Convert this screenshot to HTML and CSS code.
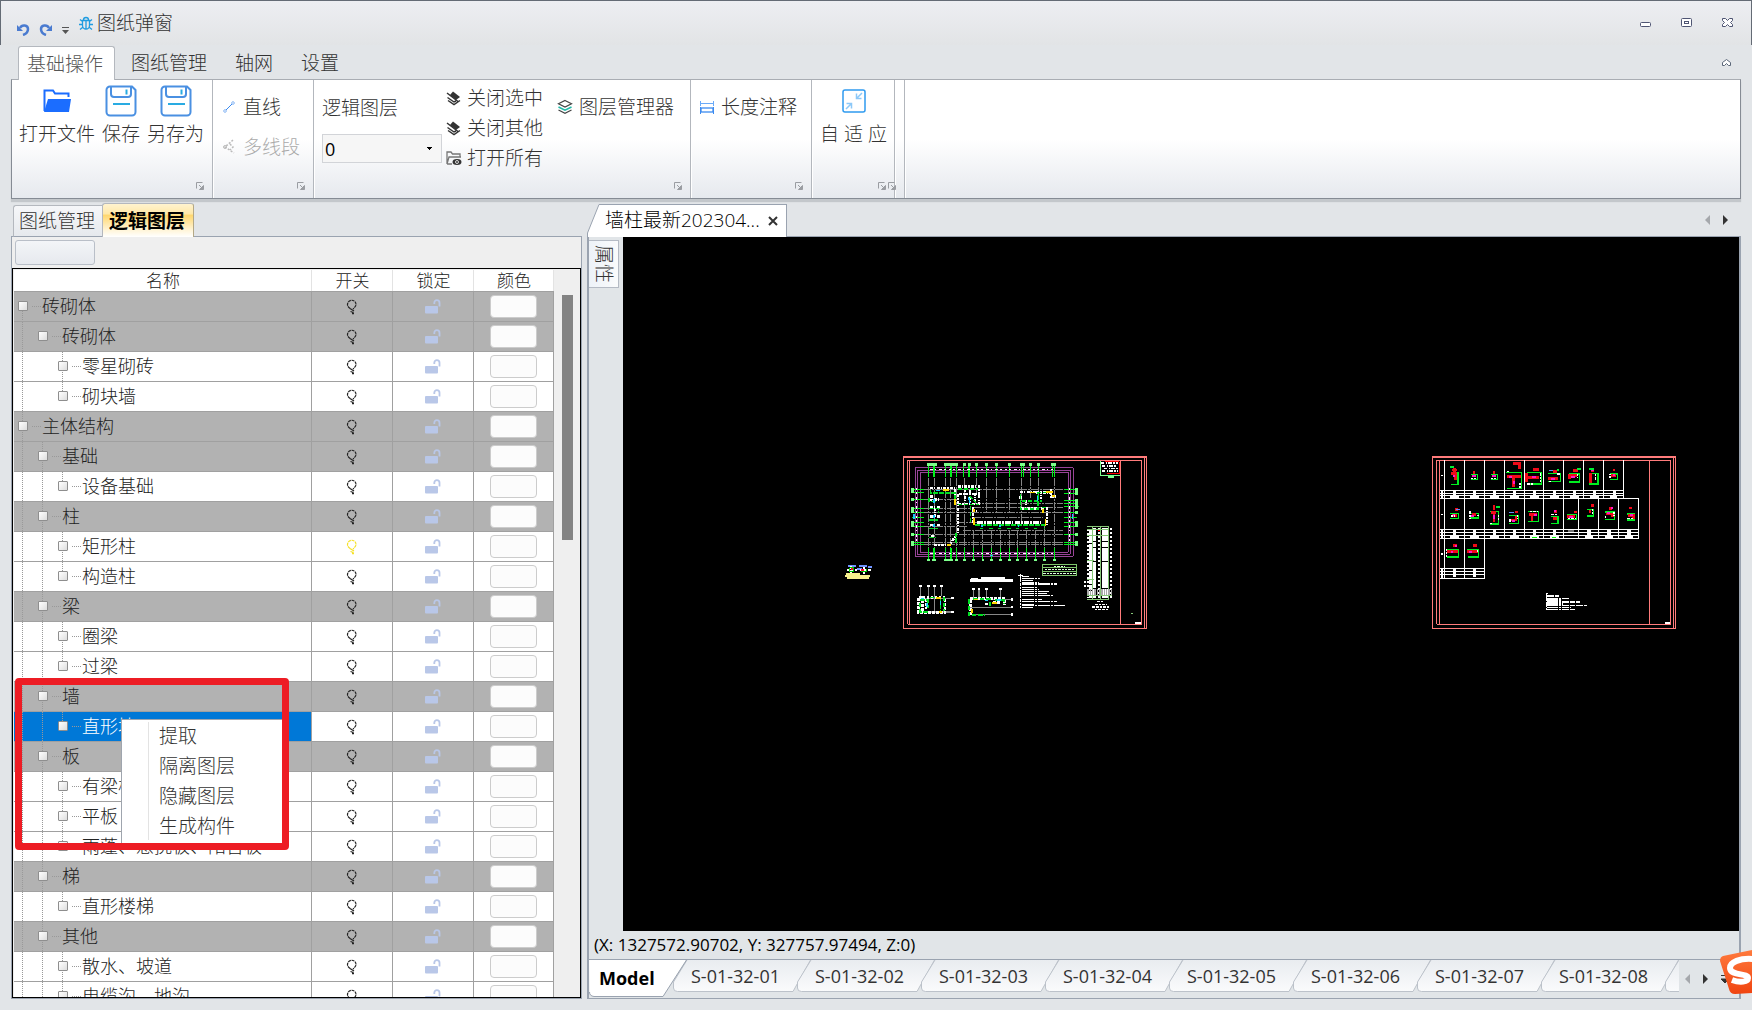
FILE: index.html
```html
<!DOCTYPE html>
<html lang="zh-CN">
<head>
<meta charset="utf-8">
<title>图纸弹窗</title>
<link rel="stylesheet" href="styles.css">
</head>
<body>
<svg class="defs" aria-hidden="true">
  <symbol id="bulb" viewBox="0 0 12 16"><path d="M4 9.500C3 8.500 1.500 7.500 1.500 5.500a4 4 0 0 1 8.500 0c0 2-1.500 3-3 4.500" fill="none" stroke="currentColor" stroke-width="1.200" stroke-dasharray="3 .7"/><path d="M4 9.500l4 2.500M4.500 12.500l3 1M6 14.500h2" stroke="currentColor" stroke-width="1.300"/></symbol>
  <symbol id="lock" viewBox="0 0 16 15"><path d="M1 7h11a1 1 0 0 1 1 1v5.500a1 1 0 0 1-1 1H1a1 1 0 0 1-1-1V8a1 1 0 0 1 1-1z" fill="#b9c7e8"/><path d="M9.300 5V3.700a2.600 2.600 0 0 1 5.200 0V7.500" fill="none" stroke="#b9c7e8" stroke-width="1.800"/></symbol>
  <symbol id="launch" viewBox="0 0 8 8"><path d="M.5 6.500V.5h6" fill="none" stroke="#9a9da2"/><path d="M7.500 3.500v4h-4zM3 3l3 3" fill="#9a9da2" stroke="#9a9da2"/></symbol>
  <symbol id="save" viewBox="0 0 32 32"><path d="M5 1.500h22l3.500 3.500v22a3.500 3.500 0 0 1-3.500 3.500H5A3.500 3.500 0 0 1 1.500 27V5A3.500 3.500 0 0 1 5 1.500z" fill="none" stroke="#4a90e2" stroke-width="2"/><path d="M6 2v7a3 3 0 0 0 3 3h14a3 3 0 0 0 3-3V2" fill="none" stroke="#4a90e2" stroke-width="2"/><path d="M21.500 4.500v5M8 19h17" stroke="#29abe2" stroke-width="2"/></symbol>
  <symbol id="closelayer" viewBox="0 0 16 16"><path d="M7 1.500L14 7l-4 3L4 5z" fill="#333"/><path d="M1 3l11 8.500M1.500 7.500L8 12l2-1M2 10.500L8 14.500l6-4" fill="none" stroke="#333" stroke-width="1.500"/></symbol>
  <symbol id="sheet" viewBox="0 0 138 32"><path d="M14 0L.5 22v6q0 3.500 4 3.500H120L137.500 0" fill="url(#tabfill)" stroke="#bcc2ca"/></symbol>
  <linearGradient id="tabfill" x1="0" y1="0" x2="0" y2="1"><stop offset="0" stop-color="#e9ecf0"/><stop offset="1" stop-color="#fafbfc"/></linearGradient>
  <linearGradient id="orange" x1="0" y1="0" x2="0" y2="1"><stop offset="0" stop-color="#ff7a3d"/><stop offset="1" stop-color="#f04410"/></linearGradient>
</svg>

<header class="titlebar">
  <button class="quick" aria-label="撤销"><svg width="13" height="13" viewBox="0 0 13 13"><path d="M3 5c2-4 8-3 8 1 0 3-2 5-5 6" fill="none" stroke="#4a7bd0" stroke-width="2.500"/><path d="M0 2v6h6z" fill="#4a7bd0"/></svg></button>
  <button class="quick" aria-label="重做"><svg width="13" height="13" viewBox="0 0 13 13"><path d="M10 5C8 1 2 2 2 6c0 3 2 5 5 6" fill="none" stroke="#4a7bd0" stroke-width="2.500"/><path d="M13 2v6H7z" fill="#4a7bd0"/></svg></button>
  <button class="quick" aria-label="自定义快速访问"><svg width="9" height="13" viewBox="0 0 9 13"><path d="M1 4.500h7" stroke="#555"/><path d="M1 7h7L4.500 11z" fill="#555"/></svg></button>
  <svg class="bug" width="14" height="15" viewBox="0 0 14 15"><path d="M4.500 4a2.500 2.500 0 0 1 5 0M3.500 4.500h7v5a3.500 3.500 0 0 1-7 0zM7 5v8M0 8.500h3.500M10.500 8.500H14M1 3.500l2.500 2M13 3.500l-2.500 2M1 13.500l2.500-2M13 13.500l-2.500-2" fill="none" stroke="#1f9ce0" stroke-width="1.300"/></svg>
  <h1>图纸弹窗</h1>
  <div class="winbtns">
    <button aria-label="最小化"><svg width="12" height="10"><rect x=".5" y="4.500" width="10" height="4" rx="1" fill="#fff" stroke="#4f5573"/></svg></button>
    <button aria-label="还原"><svg width="12" height="10"><rect x=".5" y=".5" width="10" height="8" rx="1" fill="#fff" stroke="#4f5573"/><rect x="3.500" y="3.500" width="4" height="2" fill="#fff" stroke="#4f5573"/></svg></button>
    <button aria-label="关闭"><svg width="12" height="10"><path d="M.5.500h3l2 2 2-2h3v2L8.500 4.500l2 2v2h-3l-2-2-2 2h-3v-2l2-2-2-2z" fill="#fff" stroke="#4f5573"/></svg></button>
  </div>
</header>

<nav class="menu-tabs">
  <button class="active">基础操作</button>
  <button>图纸管理</button>
  <button>轴网</button>
  <button>设置</button>
  <button class="collapse" aria-label="折叠功能区"><svg width="10" height="8"><path d="M.5 6.500v-3l4-3 4 3v3h-2l-2-2-2 2z" fill="#fff" stroke="#5b6678"/></svg></button>
</nav>

<section class="ribbon">
  <div class="group files">
    <button class="big"><span class="icon"><svg width="28" height="24" viewBox="0 0 28 24"><path d="M1.500 22V1.500h8.500l2 3h13.500V8" fill="none" stroke="#1b6dff" stroke-width="2"/><path d="M5 10h23l-2 13H1z" fill="#1b6dff"/></svg></span>打开文件</button>
    <button class="big"><span class="icon"><svg width="32" height="32"><use href="#save"/></svg></span>保存</button>
    <button class="big"><span class="icon"><svg width="32" height="32"><use href="#save"/></svg></span>另存为</button>
    <svg class="launch"><use href="#launch"/></svg>
  </div>
  <div class="group lines">
    <div class="stack wide">
      <button class="item"><svg width="16" height="16" viewBox="0 0 16 16"><path d="M5 11l6-6" stroke="#3b8af0"/><circle cx="4" cy="12" r="1.300" fill="none" stroke="#8ab8f5"/><circle cx="12" cy="4" r="1.300" fill="none" stroke="#8ab8f5"/></svg>直线</button>
      <button class="item" disabled><svg width="16" height="16" viewBox="0 0 16 16"><path d="M12 1L4 8l9 6M9 5l3 3-3 3" fill="none" stroke="#bbb" stroke-width="1.500" stroke-dasharray="2 1.500"/><circle cx="4" cy="8" r="1.500" fill="none" stroke="#bbb"/></svg>多线段</button>
    </div>
    <svg class="launch"><use href="#launch"/></svg>
  </div>
  <div class="group layers">
    <div class="stack pick">
      <label for="layer">逻辑图层</label>
      <select id="layer"><option>0</option></select>
    </div>
    <div class="stack tight">
      <button class="item"><svg width="16" height="16"><use href="#closelayer"/></svg>关闭选中</button>
      <button class="item"><svg width="16" height="16"><use href="#closelayer"/></svg>关闭其他</button>
      <button class="item"><svg width="16" height="16" viewBox="0 0 16 16"><path d="M1 14V2h4l1.500 2H14v3M1 14L3 7h12M1 14h5" fill="none" stroke="#777" stroke-width="1.300"/><ellipse cx="11" cy="12" rx="4.500" ry="3" fill="#333"/><circle cx="11" cy="12" r="1.500" fill="#333" stroke="#fff" stroke-width=".8"/></svg>打开所有</button>
    </div>
    <div class="stack wide">
      <button class="item"><svg width="16" height="16" viewBox="0 0 16 16" fill="none" stroke-width="1.200"><path d="M8 1.500l6.500 3.300L8 8 1.500 4.800z" stroke="#444"/><path d="M1.500 8L8 11.200 14.500 8" stroke="#1fb8a6" stroke-width="1.600"/><path d="M1.500 11L8 14.300l6.500-3.300" stroke="#444"/></svg>图层管理器</button>
    </div>
    <svg class="launch"><use href="#launch"/></svg>
  </div>
  <div class="group note">
    <div class="stack wide">
      <button class="item"><svg width="16" height="16" viewBox="0 0 16 16"><path d="M1.500 2v5M14.500 2v5M2 4.500h12" stroke="#6aaaf8"/><rect x="2" y="9" width="12" height="4" fill="none" stroke="#3b8af0" stroke-width="1.300"/><path d="M1.500 8v7M14.500 8v7" stroke="#3b8af0"/></svg>长度注释</button>
    </div>
    <svg class="launch"><use href="#launch"/></svg>
  </div>
  <div class="group fit">
    <button class="big"><span class="icon"><svg width="24" height="24" viewBox="0 0 24 24" fill="none"><rect x="1" y="1" width="22" height="22" rx="2" stroke="#2f9bf0" stroke-width="1.500"/><path d="M20 4l-5 5M14.500 4.500v5h5M4 20l5-5M4.500 14.500h5v5" stroke="#8cc8f8" stroke-width="1.500"/></svg></span>自 适 应</button>
    <svg class="launch"><use href="#launch"/></svg>
  </div>
  <div class="group extra"><svg class="launch"><use href="#launch"/></svg></div>
</section>

<main class="work">
  <aside class="side">
    <div class="side-tabs"><button>图纸管理</button><button class="active">逻辑图层</button></div>
    <div class="side-panel">
      <button class="blank" aria-label="操作"></button>
      <div class="frame">
        <table class="tree">
          <colgroup><col class="c-name"><col class="c-icon"><col class="c-icon"><col class="c-color"></colgroup>
          <thead><tr><th>名称</th><th>开关</th><th>锁定</th><th>颜色</th></tr></thead>
          <tbody>
            <tr class="g"><td class="l0 first"><label><input type="checkbox">砖砌体</label></td><td><svg class="bulb"><use href="#bulb"/></svg></td><td><svg class="lock"><use href="#lock"/></svg></td><td><button class="swatch" aria-label="颜色"></button></td></tr>
            <tr class="g"><td class="l1 only"><label><input type="checkbox">砖砌体</label></td><td><svg class="bulb"><use href="#bulb"/></svg></td><td><svg class="lock"><use href="#lock"/></svg></td><td><button class="swatch" aria-label="颜色"></button></td></tr>
            <tr><td class="l2 only"><label><input type="checkbox">零星砌砖</label></td><td><svg class="bulb"><use href="#bulb"/></svg></td><td><svg class="lock"><use href="#lock"/></svg></td><td><button class="swatch" aria-label="颜色"></button></td></tr>
            <tr><td class="l2 only last"><label><input type="checkbox">砌块墙</label></td><td><svg class="bulb"><use href="#bulb"/></svg></td><td><svg class="lock"><use href="#lock"/></svg></td><td><button class="swatch" aria-label="颜色"></button></td></tr>
            <tr class="g"><td class="l0"><label><input type="checkbox">主体结构</label></td><td><svg class="bulb"><use href="#bulb"/></svg></td><td><svg class="lock"><use href="#lock"/></svg></td><td><button class="swatch" aria-label="颜色"></button></td></tr>
            <tr class="g"><td class="l1"><label><input type="checkbox">基础</label></td><td><svg class="bulb"><use href="#bulb"/></svg></td><td><svg class="lock"><use href="#lock"/></svg></td><td><button class="swatch" aria-label="颜色"></button></td></tr>
            <tr><td class="l2 last"><label><input type="checkbox">设备基础</label></td><td><svg class="bulb"><use href="#bulb"/></svg></td><td><svg class="lock"><use href="#lock"/></svg></td><td><button class="swatch" aria-label="颜色"></button></td></tr>
            <tr class="g"><td class="l1"><label><input type="checkbox">柱</label></td><td><svg class="bulb"><use href="#bulb"/></svg></td><td><svg class="lock"><use href="#lock"/></svg></td><td><button class="swatch" aria-label="颜色"></button></td></tr>
            <tr><td class="l2"><label><input type="checkbox">矩形柱</label></td><td><svg class="bulb lit"><use href="#bulb"/></svg></td><td><svg class="lock"><use href="#lock"/></svg></td><td><button class="swatch" aria-label="颜色"></button></td></tr>
            <tr><td class="l2 last"><label><input type="checkbox">构造柱</label></td><td><svg class="bulb"><use href="#bulb"/></svg></td><td><svg class="lock"><use href="#lock"/></svg></td><td><button class="swatch" aria-label="颜色"></button></td></tr>
            <tr class="g"><td class="l1"><label><input type="checkbox">梁</label></td><td><svg class="bulb"><use href="#bulb"/></svg></td><td><svg class="lock"><use href="#lock"/></svg></td><td><button class="swatch" aria-label="颜色"></button></td></tr>
            <tr><td class="l2"><label><input type="checkbox">圈梁</label></td><td><svg class="bulb"><use href="#bulb"/></svg></td><td><svg class="lock"><use href="#lock"/></svg></td><td><button class="swatch" aria-label="颜色"></button></td></tr>
            <tr><td class="l2 last"><label><input type="checkbox">过梁</label></td><td><svg class="bulb"><use href="#bulb"/></svg></td><td><svg class="lock"><use href="#lock"/></svg></td><td><button class="swatch" aria-label="颜色"></button></td></tr>
            <tr class="g"><td class="l1"><label><input type="checkbox">墙</label></td><td><svg class="bulb"><use href="#bulb"/></svg></td><td><svg class="lock"><use href="#lock"/></svg></td><td><button class="swatch" aria-label="颜色"></button></td></tr>
            <tr><td class="l2 last selected"><label><input type="checkbox">直形墙</label></td><td><svg class="bulb"><use href="#bulb"/></svg></td><td><svg class="lock"><use href="#lock"/></svg></td><td><button class="swatch" aria-label="颜色"></button></td></tr>
            <tr class="g"><td class="l1"><label><input type="checkbox">板</label></td><td><svg class="bulb"><use href="#bulb"/></svg></td><td><svg class="lock"><use href="#lock"/></svg></td><td><button class="swatch" aria-label="颜色"></button></td></tr>
            <tr><td class="l2"><label><input type="checkbox">有梁板</label></td><td><svg class="bulb"><use href="#bulb"/></svg></td><td><svg class="lock"><use href="#lock"/></svg></td><td><button class="swatch" aria-label="颜色"></button></td></tr>
            <tr><td class="l2"><label><input type="checkbox">平板</label></td><td><svg class="bulb"><use href="#bulb"/></svg></td><td><svg class="lock"><use href="#lock"/></svg></td><td><button class="swatch" aria-label="颜色"></button></td></tr>
            <tr><td class="l2 last"><label><input type="checkbox">雨蓬、悬挑板、阳台板</label></td><td><svg class="bulb"><use href="#bulb"/></svg></td><td><svg class="lock"><use href="#lock"/></svg></td><td><button class="swatch" aria-label="颜色"></button></td></tr>
            <tr class="g"><td class="l1"><label><input type="checkbox">梯</label></td><td><svg class="bulb"><use href="#bulb"/></svg></td><td><svg class="lock"><use href="#lock"/></svg></td><td><button class="swatch" aria-label="颜色"></button></td></tr>
            <tr><td class="l2 last"><label><input type="checkbox">直形楼梯</label></td><td><svg class="bulb"><use href="#bulb"/></svg></td><td><svg class="lock"><use href="#lock"/></svg></td><td><button class="swatch" aria-label="颜色"></button></td></tr>
            <tr class="g"><td class="l1"><label><input type="checkbox">其他</label></td><td><svg class="bulb"><use href="#bulb"/></svg></td><td><svg class="lock"><use href="#lock"/></svg></td><td><button class="swatch" aria-label="颜色"></button></td></tr>
            <tr><td class="l2"><label><input type="checkbox">散水、坡道</label></td><td><svg class="bulb"><use href="#bulb"/></svg></td><td><svg class="lock"><use href="#lock"/></svg></td><td><button class="swatch" aria-label="颜色"></button></td></tr>
            <tr><td class="l2"><label><input type="checkbox">电缆沟、地沟</label></td><td><svg class="bulb"><use href="#bulb"/></svg></td><td><svg class="lock"><use href="#lock"/></svg></td><td><button class="swatch" aria-label="颜色"></button></td></tr>
          </tbody>
        </table>
        <div class="scroll"><div class="thumb"></div></div>
        <div class="context">
          <button>提取</button><button>隔离图层</button><button>隐藏图层</button><button>生成构件</button>
        </div>
        <div class="marker"></div>
      </div>
    </div>
  </aside>

  <section class="doc">
    <div class="doc-tabs">
      <div class="doc-tab">
        <svg class="slant" width="13" height="33"><path d="M13 0v33H0L.5 29 12 .5z" fill="#fff"/><path d="M.5 33v-4L12 .5h1" fill="none" stroke="#9aa3b0"/></svg>
        <span>墙柱最新202304...</span>
        <button aria-label="关闭"><svg width="10" height="10"><path d="M1 1l8 8M9 1L1 9" stroke="#333" stroke-width="2"/></svg></button>
      </div>
      <div class="arrows">
        <button aria-label="向左"><svg width="5" height="10"><path d="M5 0v10L0 5z" fill="#a5a8ac"/></svg></button>
        <button aria-label="向右"><svg width="5" height="10"><path d="M0 0v10l5-5z" fill="#333"/></svg></button>
      </div>
    </div>
    <div class="doc-panel">
      <div class="view">
        <div class="rail"><button>属性</button></div>
        <div class="canvas">
          <svg width="100%" height="100%" shape-rendering="crispEdges" fill="none">
            <g transform="translate(212 319) scale(.33333)" stroke-width="3">
              <path d="M39 30h24M72 30h24M81 39H66M110 33h-10" stroke="#6f92ff" stroke-width="6"/>
              <path d="M48 30v24M87 33v21M35 42h30M74 42h34" stroke="#fff" stroke-width="5" stroke-dasharray="9 3"/>
              <path d="M45 36h12v12H42zM78 48h18v-9" stroke="#0c0"/><path d="M78 42h10M48 39h6" stroke="#f03" stroke-width="6"/>
              <path d="M31 60h74M34 54h40M36 66h66" stroke="#f7f08c" stroke-width="6"/>
            </g>
            <g transform="translate(267 209) scale(.33333)" stroke-width="3">
              <path d="M41 33h728v514H41z" stroke="#ff7b7b" stroke-width="4"/><path d="M53 43h702v492H53zM59 43v492M691 43v492M763 33v514" stroke="#ff7b7b" stroke-width="3"/>
              <path d="M76 65h474v266H76zM82 73h459v252H82zM91 79h444v240H91z" stroke="#984498"/>
              <path d="M115 95v210M133 95v210M166 95v210M183 95v210M199 95v210M223 95v210M259 95v50M289 95v110M319 95v110M358 95v110M394 95v130M421 95v60M445 95v60M493 95v210M250 255v50M278 255v50M304 255v50M331 255v50M358 255v50M382 255v50M409 255v50M436 255v50M463 240v65M100 130h420M100 160h100M250 172h270M100 187h140M250 184h270M100 199h420M250 214h210M200 229h60M100 241h130M220 253h300M100 265h420M100 289h420M100 295h420" stroke="#858585" stroke-dasharray="24 3 6 3"/>
              <path d="M115 60v34M132 60v34M166 60v34M184 60v34M199 60v34M221 60v34M237 60v34M259 60v34M289 60v34M319 60v34M358 60v34M394 60v34M400 60v34M421 60v34M445 60v34M487 60v34M493 60v34M115 305v36M131 305v36M166 305v36M183 305v36M199 305v36M223 305v36M250 305v36M278 305v36M304 305v36M331 305v36M358 305v36M382 305v36M409 305v36M436 305v36M463 305v36M493 305v36M66 130h36M66 139h36M66 160h36M66 187h36M66 199h36M66 214h36M66 229h36M66 241h36M66 265h36M66 289h36M66 295h36M522 130h38M522 142h38M522 163h38M522 172h38M522 181h46M522 199h38M522 214h38M522 229h38M522 241h38M522 265h38M522 289h38M522 295h38" stroke="#00f31c" stroke-width="4"/>
              <path d="M133 60v34M184 60v34M132 305v36M184 305v36" stroke="#00f31c" stroke-width="6"/>
              <path d="M112 56h28M163 56h42M218 56h10M234 56h8M256 56h8M286 56h8M316 56h8M355 56h8M391 56h14M418 56h8M442 56h8M484 56h14M112 342h8M127 342h10M163 342h26M196 342h8M220 342h8M247 342h8M275 342h8M301 342h8M328 342h8M355 342h8M379 342h8M406 342h8M433 342h8M460 342h8M490 342h8M67 126v16M67 157v8M67 184v18M67 226v18M67 262v8M67 286v14M560 126v22M560 160v28M560 196v8M560 226v18M560 262v8M560 286v14" stroke="#7dff8c" stroke-width="8"/>
              <path d="M120 71h370M120 322h370M81 125v170M540 125v170" stroke="#fff" stroke-dasharray="8 6 5 9"/>
              <path d="M120 126h76v45M203 122h64v24M205 175h62V148M225 130v40M240 132v38M256 140v30M206 145h60M125 147v14h22M120 183h30M136 185v30M120 212h30M120 238h30M133 270h-12M133 298h45l20-30M204 145v115M390 138h64v22M386 155h14M392 188h70M408 162v20M438 140h52M484 130v22h14M250 182v50M472 182v60M245 195h20" stroke="#fff" stroke-width="7" stroke-dasharray="9 3 4 4"/>
              <path d="M262 230h26M290 230h24M318 230h24M346 230h24M374 230h24M402 230h24M430 230h24" stroke="#fff" stroke-width="7" stroke-dasharray="16 3"/>
              <path d="M122 132v10h74v34h72M204 130h60M238 150l20 20M118 155v12h24M118 188h28v12M118 222h25M118 248h25M118 275h20M198 290v-30M392 145v45h52V140h30M395 165h60M455 185h14M242 180v55M256 238h208v12M270 248h10M298 248h10M324 248h10M352 248h10M378 248h10M405 248h10M432 248h10" stroke="#00dc20" stroke-width="5" stroke-dasharray="13 5"/>
              <path d="M160 133h18M172 297h12M196 160v18M253 190v8M253 215v22M467 138h22M486 150h10M460 190v12M467 220v20M420 140h16" stroke="#ffd800" stroke-width="5"/>
              <path d="M235 152l5 18M139 133h12M132 160v10M132 206v10M132 234v10M72 205v14M548 205v14M442 150v14M299 328h10M276 236v8M330 236v8M385 236v8" stroke="#19c8ff" stroke-width="4"/>
              <path d="M633 51h50M636 60h46M642 68h45M636 76h48" stroke="#fff" stroke-width="5" stroke-dasharray="10 4 5 3"/><path d="M645 48h43v36h-38" stroke="#f00" stroke-width="3"/><path d="M631 45v44h59" stroke="#7dff90" stroke-width="4"/><path d="M654 94h17" stroke="#7dff90" stroke-width="7"/>
              <path d="M457 355h103v33H457zM457 366h103M457 376h103" stroke="#7fc66d"/><path d="M492 361h34M465 371h90M460 382h98" stroke="#e0ffe0" stroke-dasharray="7 3"/>
              <path d="M602 252v203M613 245v210M640 245v210M649 245v210" stroke="#fff" stroke-width="9" stroke-dasharray="40 2 17 2"/><path d="M626 245v210M595 248v208M663 245v210M585 405v20" stroke="#fff" stroke-width="6" stroke-dasharray="7 5"/>
              <path d="M591 242h66v218h-66M607 242v218M632 242v218M656 242v218M592 252h66M592 268h66M592 345h20M592 402h20M592 450h75" stroke="#86c778"/>
              <path d="M592 434h75M592 443h75" stroke="#aaa" stroke-width="7" stroke-dasharray="4 3"/><path d="M624 253h6" stroke="#f00"/><path d="M621 467h20M615 475h36M607 483h50M614 490h40" stroke="#fff" stroke-width="4" stroke-dasharray="8 3"/>
              <path d="M240 404h128" stroke="#fff" stroke-width="7"/><path d="M243 399h20M274 396h70" stroke="#fff" stroke-width="6"/>
              <path d="M392 385v100M385 388h14M396 391h20M396 397h54M396 403h34M396 409h50M396 414h104M396 424h46M396 430h50M396 437h80M396 443h74M396 449h95M396 461h60M396 467h104M396 475h38M396 478h128M396 484h34" stroke="#fff" stroke-width="4" stroke-dasharray="23 2 11 2 7 3"/>
              <path d="M92 420v30M115 420v30M133 420v75M154 420v30M80 457h105M80 498h105M250 430v30M267 430v30M289 430v30M331 430v30M236 461h130M236 484h130M245 506h120" stroke="#888" stroke-width="4"/>
              <path d="M88 421h8M111 421h8M129 421h8M150 421h8M184 457h7M184 498h7M247 430h8M263 430h8M285 430h8M327 430h8M362 461h7M362 484h7M362 506h7" stroke="#fff" stroke-width="7"/>
              <path d="M86 455h80v45H86zM98 450v50M108 460v30M240 458h104v20M242 462v48M290 458v22M310 470h22" stroke="#fff" stroke-width="7" stroke-dasharray="8 4"/>
              <path d="M90 463h24v22M90 470v28h28M120 455h42v40M152 455v40M238 460v50M245 508h40M250 460h50v20M315 462h28v12" stroke="#0d2" stroke-width="5" stroke-dasharray="14 5"/><path d="M138 457h16M146 499h10M252 461h12M246 490v10M306 472h14" stroke="#ffd800" stroke-width="5"/><path d="M92 458h10M112 470v12M152 465v12M284 464h10M322 462h10" stroke="#22d4ff" stroke-width="5"/>
              <path d="M723 503h6" stroke="#86c778" stroke-width="4"/><path d="M736 531h17" stroke="#fff" stroke-width="6"/>
            </g>
            <g transform="translate(797 209) scale(.33333)" stroke-width="3">
              <path d="M38 33h728v514H38z" stroke="#ff7b7b" stroke-width="4"/><path d="M50 43h703v492H50zM59 43v492M688 43v492M760 33v514" stroke="#ff7b7b" stroke-width="3"/>
              <path d="M74 43v116M134 43v116M194 43v116M254 43v116M314 43v116M371 43v116M431 43v116M491 43v116M551 43v116M611 43v116M74 160v117M134 160v117M194 160v117M254 160v117M314 160v117M371 160v117M431 160v117M476 160v117M536 160v117M596 160v117M656 160v117M74 277v120M134 277v120M194 277v120M60 133h551M60 142h551M60 150h551M60 159h596M60 250h596M60 259h596M60 268h596M60 277h596M60 367h134M60 376h134M60 386h134M60 397h134" stroke="#fff"/>
              <path d="M98 146h493" stroke="#fff" stroke-width="22" stroke-dasharray="11 49"/><path d="M91 154h500" stroke="#fff" stroke-width="7" stroke-dasharray="25 35"/>
              <path d="M98 264h340M502 264h140" stroke="#fff" stroke-width="22" stroke-dasharray="11 49"/><path d="M91 272h345M495 272h145" stroke="#fff" stroke-width="7" stroke-dasharray="25 35"/>
              <path d="M98 382h80" stroke="#fff" stroke-width="24" stroke-dasharray="11 49"/><path d="M445 255h16" stroke="#777" stroke-width="6"/><path d="M336 274h14M396 274h12" stroke="#0f0"/>
              <path d="M63 88h6M63 206h6M63 324h6M66 133v26M66 250v27M66 367v30" stroke="#fff" stroke-width="4"/>
              <path d="M92 80h22v35H92M152 86h20v14h-20M212 86h20v14h-20M258 80h46v47h-44M320 80h44v34h-44M383 82h38v24h-38M446 84h32v24h-32M508 82h26v32h-26M570 84h22v16h-22M90 202h26v16H90M150 202h26v14h-26M210 196h26v38h-26M268 208h28v24h-28M324 196h32v30h-32M394 212h20v20h-20M442 206h28v14h-28M502 190h18v20h-18M554 198h30v22h-30M622 204h22v18h-22M80 312h35v21H82M142 312h33v21h-30" stroke="#00ef20" stroke-width="4"/>
              <path d="M92 82h14v20M260 92h42M280 92v30M320 82v26M322 94h36M384 98h30M448 100v-12h24M512 80v32M574 88h14M96 208h14M156 206h12M222 198v30M212 200h16M272 222h16v-12M326 206h24M336 206v20M400 218h10M442 212h22M506 196h8M558 204h20v10M624 208h16v12M82 317h32M142 317h32M96 72h14M104 66v12M278 52h20v18M340 70h18M400 76h12M460 74h14M518 66v12M578 72h8M104 190h10M222 178v14M286 198h8M402 196h8M462 198h10M514 178h8M568 188h8M628 186h8M98 299h14M158 299h14M158 80h8M218 80h8" stroke="#f00a18" stroke-width="8"/>
              <path d="M98 90h8M156 90h12M216 90h12M266 92h10M282 105v8M336 94h12M392 98h12M454 92h12M514 72h8M578 88h6M98 206h8M154 210h8M222 208v10M276 224h8M342 206h8M402 194h6M448 212h10M562 202h8M630 206h8M92 317h8M148 317h8M106 299h6M572 186h6" stroke="#ff18c8" stroke-width="6"/>
              <path d="M90 63h12M152 98h18M212 98h18M260 76h10M300 110v16M362 82v28M322 114h20M412 84h8M386 106h10M472 84v12M526 84v20M570 96v-12M92 210h14M150 196v24M172 208h6M236 206v20M210 232h8M270 220v12M292 206v12M330 196h24M394 206h18M444 218h24M518 188v18M556 210v10M582 198v12M622 218h20M80 308v26M172 312v8" stroke="#fff" stroke-width="4" stroke-dasharray="7 3"/>
              <path d="M90 63h12M470 69h12M508 70h14M228 182h12M412 73h6" stroke="#0e3" stroke-width="6"/><path d="M108 190h12M386 74h14M268 200h14" stroke="#668cff" stroke-width="4"/>
              <path d="M380 443v50M378 443h7M380 450h36M382 457h64M382 462h45M382 468h98M382 474h46M382 478h122M382 484h72M382 491h82" stroke="#fff" stroke-width="4" stroke-dasharray="22 2 9 2 5 3"/><path d="M735 531h16" stroke="#fff" stroke-width="6"/>
            </g>
          </svg>
        </div>
      </div>
      <output class="status">(X: 1327572.90702, Y: 327757.97494, Z:0)</output>
      <div class="sheets">
        <div class="sheet-list">
          <button class="model"><svg width="98" height="38"><path d="M0 0h97L74 36.500H5Q.5 36 .5 32z" fill="#fff"/><path d="M97.500 0L74 36.500H5Q.5 36 .5 32" fill="none" stroke="#9aa3b0"/></svg><span>Model</span></button>
          <button class="sheet"><svg><use href="#sheet"/></svg><span>S-01-32-01</span></button>
          <button class="sheet"><svg><use href="#sheet"/></svg><span>S-01-32-02</span></button>
          <button class="sheet"><svg><use href="#sheet"/></svg><span>S-01-32-03</span></button>
          <button class="sheet"><svg><use href="#sheet"/></svg><span>S-01-32-04</span></button>
          <button class="sheet"><svg><use href="#sheet"/></svg><span>S-01-32-05</span></button>
          <button class="sheet"><svg><use href="#sheet"/></svg><span>S-01-32-06</span></button>
          <button class="sheet"><svg><use href="#sheet"/></svg><span>S-01-32-07</span></button>
          <button class="sheet"><svg><use href="#sheet"/></svg><span>S-01-32-08</span></button>
          <button class="sheet" aria-label="下一张"><svg><use href="#sheet"/></svg></button>
        </div>
        <div class="arrows">
          <button aria-label="向左"><svg width="5" height="10"><path d="M5 0v10L0 5z" fill="#a5a8ac"/></svg></button>
          <button aria-label="向右"><svg width="5" height="10"><path d="M0 0v10l5-5z" fill="#333"/></svg></button>
          <button aria-label="更多"><svg width="8" height="10"><path d="M0 1.500h8M0 5h8L4 9z" fill="#333" stroke="#333"/></svg></button>
        </div>
      </div>
    </div>
  </section>
</main>
<svg class="ime" width="32" height="46" viewBox="0 0 32 46"><path d="M3 7L32 1v43l-17 1q-5 0-6-5L0 12q0-4 3-5z" fill="url(#orange)"/><path d="M33 10C20 9 10 13 10 19c0 8 18 5 18 10 0 4-8 5-16 2" fill="none" stroke="#fff" stroke-width="6"/></svg>
</body>
</html>
```
FILE: styles.css
```css
* { box-sizing: border-box; }
body {
  margin: 0;
  height: 100vh;
  display: flex;
  flex-direction: column;
  overflow: hidden;
  background: #e2e5e8;
  color: #333;
  font: 300 19px/24px "Open Sans", "Noto Sans CJK SC", sans-serif;
}
button, select, input { font: inherit; color: inherit; margin: 0; }
button { padding: 0; border: 0; background: none; white-space: nowrap; }
svg { display: block; flex: none; }
.defs { position: absolute; width: 0; height: 0; }

.titlebar {
  flex: none;
  display: flex;
  align-items: center;
  height: 45px;
  padding: 0 17px 0 16px;
  border: solid #646b75;
  border-width: 1px 1px 0;
  background: linear-gradient(#edeef2, #e2e4e6);
}
.titlebar h1 { margin: 0 auto 0 4px; font: inherit; }
.quick { margin: 13px 9px 0 0; }
.winbtns { display: flex; gap: 29px; }

.menu-tabs {
  flex: none;
  display: flex;
  height: 35px;
  padding: 0 20px 0 18px;
  margin-bottom: -1px;
  position: relative;
  z-index: 1;
}
.menu-tabs button { padding: 0 14px; }
.menu-tabs .active {
  margin-top: 1px;
  padding: 0 11px 0 8px;
  margin-right: 2px;
  border: 1px solid #b4b8be;
  border-bottom: 0;
  border-radius: 3px 3px 0 0;
  background: #fff;
  color: #555;
}
.menu-tabs .collapse { margin-left: auto; padding: 0; }

.ribbon {
  flex: none;
  display: flex;
  height: 120px;
  margin: 0 11px;
  border: 1px solid #858b94;
  border-top-color: #a9adb3;
  background: linear-gradient(#fff 50%, #e6e9ee);
  box-shadow: 0 3px 1px #c3c7cb;
}
.group {
  position: relative;
  display: flex;
  align-items: flex-start;
  border-right: 1px solid #b3b7bd;
  box-shadow: 1px 0 #fff;
}
.files { gap: 7px; padding: 5px 8px 0 7px; }
.lines { padding: 0 13px 0 8px; }
.layers { padding: 0 16px 0 8px; }
.note { padding: 0 14px 0 8px; }
.fit { padding: 5px 7px 0 8px; }
.extra { width: 10px; }
.launch { position: absolute; right: 8px; bottom: 8px; width: 8px; height: 8px; }
.big { display: flex; flex-direction: column; align-items: center; gap: 5px; }
.icon { display: flex; align-items: center; height: 32px; }
.stack { display: flex; flex-direction: column; align-items: flex-start; }
.wide { gap: 16px; padding-top: 15px; }
.tight { gap: 6px; padding: 6px 14px 0 4px; }
.pick { gap: 14px; padding-top: 16px; }
.item { display: flex; align-items: center; gap: 6px; }
.tight .item { gap: 5px; }
.item:disabled { color: #aaa; }
select {
  appearance: none;
  width: 120px;
  height: 29px;
  padding: 0 2px;
  border: 1px solid #d2d4d8;
  border-radius: 0;
  background: linear-gradient(#000, #000) 104px 12px / 5px 1px no-repeat, linear-gradient(#000, #000) 105px 13px / 3px 1px no-repeat, linear-gradient(#000, #000) 106px 14px / 1px 1px no-repeat, #f6f6f6;
  color: #000;
  font-size: 18px;
  font-weight: 400;
}

.work { flex: 1; min-height: 0; display: flex; gap: 5px; padding: 4px 11px 11px; }
.side { width: 571px; flex: none; display: flex; flex-direction: column; }
.side-tabs { display: flex; align-items: flex-end; height: 34px; padding-left: 2px; margin-bottom: -1px; z-index: 1; }
.side-tabs button {
  height: 32px;
  padding: 0 7px 0 5px;
  border: 1px solid #b4b8be;
  border-bottom-color: #9aa3b0;
  border-right: 0;
  border-radius: 3px 0 0 0;
  background: linear-gradient(#f6f7f9, #e6e9ed);
}
.side-tabs .active {
  height: 34px;
  padding: 0 8px 0 6px;
  border-right: 1px solid #b4a886;
  border-bottom: 0;
  border-radius: 3px 3px 0 0;
  background: linear-gradient(#fff3cf, #ffe8a8 30%, #ffd76e 34%, #fff5da 80%, #fff);
  color: #000;
  font-weight: 700;
}
.side-panel { flex: 1; min-height: 0; display: flex; flex-direction: column; border: 1px solid #9aa3b0; background: #efefef; }
.blank { flex: none; width: 80px; height: 25px; margin: 3px 0 3px 3px; border: 1px solid #b9bfc8; border-radius: 3px; background: linear-gradient(#f3f5f8, #e6e9ee); }
.frame { position: relative; flex: 1; min-height: 0; display: flex; align-items: flex-start; overflow: hidden; border: 1px solid #000; padding: 1px 0 0 1px; }

.tree { flex: none; width: 540px; table-layout: fixed; border-spacing: 0; color: #222; font-size: 18px; }
.c-name { width: 298px; }
.c-icon { width: 81px; }
.c-color { width: 80px; }
.tree th { height: 22px; padding: 0; border: solid #a0a0a0; border-width: 0 0 1px; box-shadow: inset -1px 0 #e3e3e3; background: #fff; font-weight: 300; line-height: 20px; font-size: 17px; }
.tree td { height: 30px; padding: 0; border: solid #a0a0a0; border-width: 0 1px 1px 0; background-color: #fff; line-height: 20px; }
.tree .g td { background-color: #b2b2b2; }
.tree td svg, .swatch { display: block; margin: 0 auto; }
.tree .bulb { width: 12px; height: 16px; color: #222; }
.tree .bulb.lit { color: #f5e12a; }
.tree .lock { width: 16px; height: 15px; }
.swatch { width: 47px; height: 23px; border: 1px solid #ccc; border-radius: 4px; background: #fcfcfc; }
.tree label { display: flex; align-items: center; padding-bottom: 2px; white-space: nowrap; background: repeating-linear-gradient(90deg, #999 0 1px, transparent 1px 2px) 14px 50% / 9px 1px no-repeat; }
.tree input { appearance: none; width: 10px; height: 10px; margin-right: 14px; border: 1px solid #8e8e8e; border-radius: 1px; background: linear-gradient(135deg, #fff, #ddd); }
.tree td:first-child {
  --dots: repeating-linear-gradient(#999 0 1px, transparent 1px 2px);
  overflow: hidden;
  background-image: var(--dots), var(--dots), var(--dots);
  background-repeat: no-repeat;
  background-position: 8px 0, 28px 0, 48px 0;
}
.tree .l0 { padding-left: 4px; background-size: 1px 30px, 0 0, 0 0; }
.tree td.l0.first { background-position: 8px 15px, 0 0, 0 0; }
.tree .l1 { padding-left: 24px; background-size: 1px 30px, 1px 30px, 0 0; }
.tree .l1.only { background-size: 1px 30px, 0 0, 0 0; }
.tree .l2 { padding-left: 44px; background-size: 1px 30px, 1px 30px, 1px 30px; }
.tree .l2.last { background-size: 1px 30px, 1px 30px, 1px 15px; }
.tree .l2.only { background-size: 1px 30px, 0 0, 1px 30px; }
.tree .l2.only.last { background-size: 1px 30px, 0 0, 1px 15px; }
.tree .selected { background-color: #0078d7; color: #fff; }
.scroll { align-self: stretch; padding: 25px 0 0 8px; }
.thumb { width: 11px; height: 245px; background: #838383; }

.context {
  position: absolute;
  left: 108px;
  top: 450px;
  width: 162px;
  padding: 1px 0 3px 26px;
  border: 1px solid #9fa5ae;
  background: linear-gradient(#e3e3e3, #e3e3e3) 26px 2px / 1px 118px no-repeat #fff;
  display: flex;
  flex-direction: column;
}
.context button { height: 30px; padding: 0 0 0 11px; text-align: left; }
.marker { position: absolute; left: 2px; top: 409px; width: 274px; height: 172px; border: 7px solid #ed1c24; border-radius: 4px; }

.doc { flex: 1; min-width: 0; display: flex; flex-direction: column; }
.doc-tabs { display: flex; align-items: flex-end; justify-content: space-between; height: 34px; padding-right: 13px; margin-bottom: -1px; z-index: 1; }
.doc-tab { display: flex; align-items: center; height: 33px; color: #000; }
.doc-tab span { padding: 0 8px 0 5px; height: 33px; line-height: 30px; border-top: 1px solid #9aa3b0; background: #fff; }
.doc-tab button { height: 33px; padding-right: 8px; border: 1px solid #9aa3b0; border-width: 1px 1px 0 0; background: #fff; }
.arrows { display: flex; gap: 13px; align-self: center; }
.doc-panel { flex: 1; min-height: 0; display: flex; flex-direction: column; border: 1px solid #9aa3b0; border-left-width: 2px; border-right-width: 2px; background: #e1e5e8; }
.view { flex: 1; min-height: 0; display: flex; }
.rail { width: 34px; padding-top: 3px; }
.rail button { width: 30px; height: 48px; writing-mode: vertical-rl; text-orientation: sideways; border: 1px solid #b4bac4; border-left: 0; background: linear-gradient(90deg, #edf2f8, #fafbfc); line-height: 28px; }
.canvas { flex: 1; min-width: 0; background: #000; }
.status { flex: none; height: 28px; padding: 2px 5px; color: #000; font-size: 17px; font-weight: 400; }
.sheets { flex: none; display: flex; justify-content: space-between; height: 39px; border-top: 1px solid #9aa3b0; padding-right: 10px; font-size: 18px; font-weight: 400; }
.sheet-list { flex: 1; min-width: 0; margin-right: 6px; display: flex; align-items: flex-start; overflow: hidden; }
.model, .sheet { position: relative; flex: none; height: 38px; text-align: left; }
.model { width: 84px; padding: 0 0 2px 10px; color: #000; font-weight: 700; z-index: 1; }
.sheet { width: 124px; height: 32px; padding-left: 18px; }
.model svg, .sheet svg { position: absolute; left: 0; top: 0; }
.sheet svg { width: 138px; height: 32px; }
.model span, .sheet span { position: relative; }
.ime { position: absolute; right: 0; bottom: 15px; z-index: 3; }
```
